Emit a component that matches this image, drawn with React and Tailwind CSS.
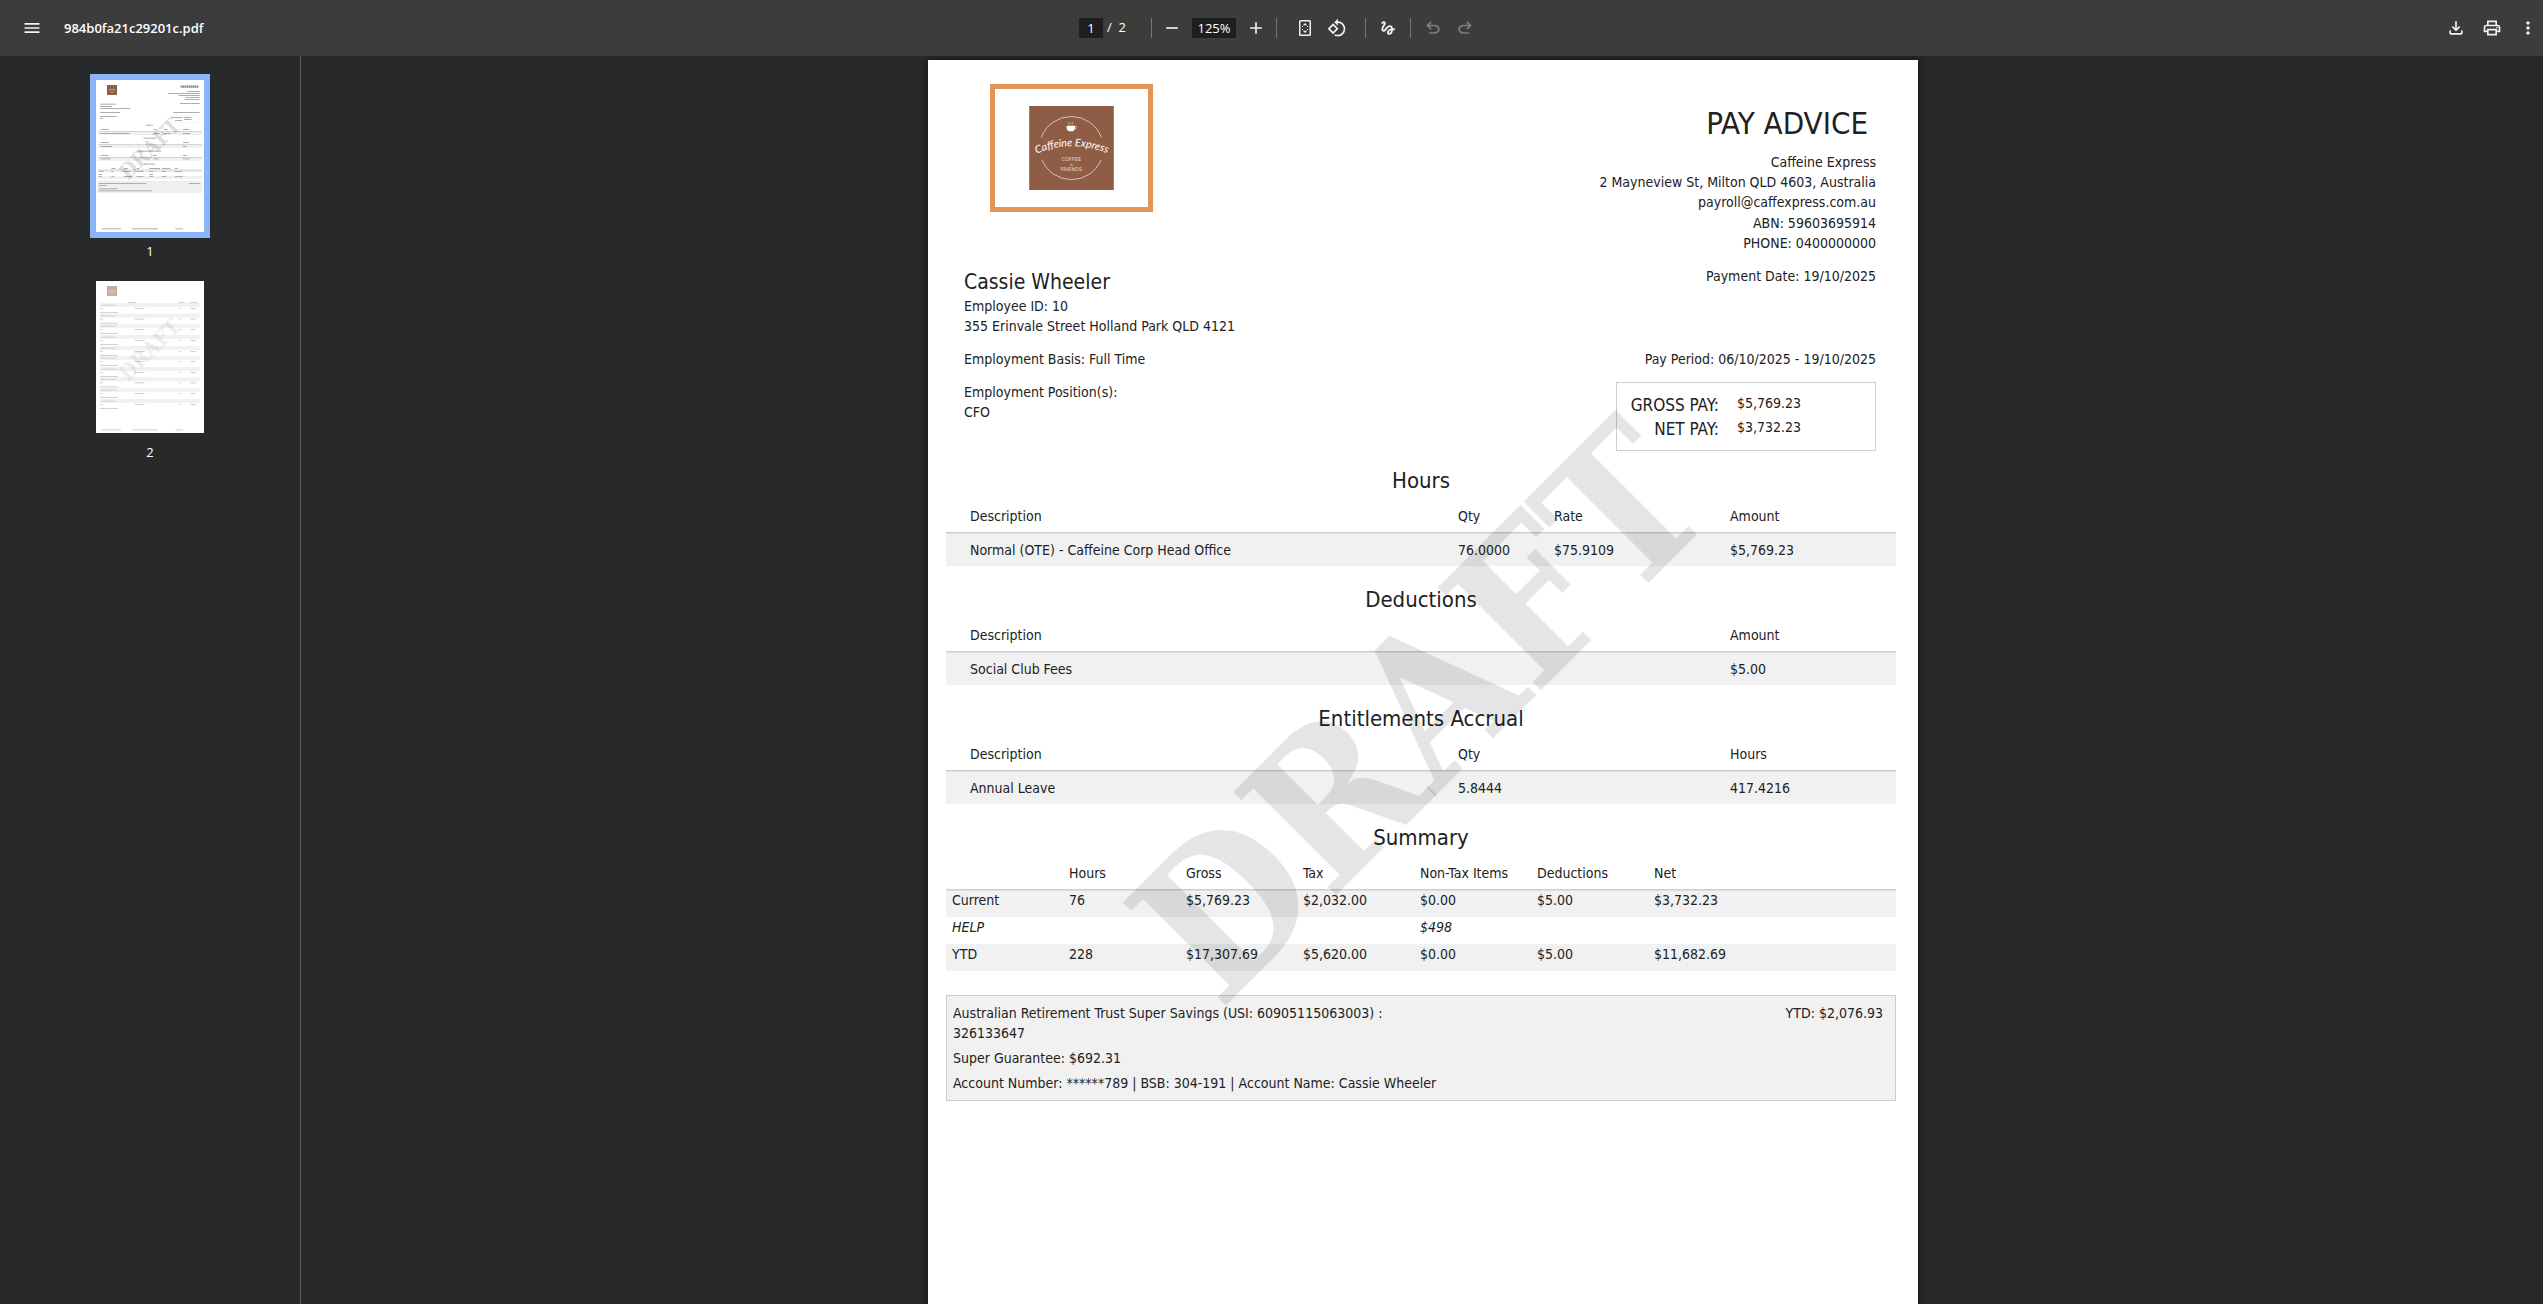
import React from 'react';
import { MdAdd, MdGesture, MdMenu, MdMoreVert, MdOutlinePrint, MdOutlineRotate90DegreesCcw, MdRemove } from 'react-icons/md';

const HOURS = {
  title: 'Hours',
  head: ['Description', 'Qty', 'Rate', 'Amount'],
  row: ['Normal (OTE) - Caffeine Corp Head Office', '76.0000', '$75.9109', '$5,769.23'],
};

const DEDUCTIONS = {
  title: 'Deductions',
  head: ['Description', '', '', 'Amount'],
  row: ['Social Club Fees', '', '', '$5.00'],
};

const ENTITLEMENTS = {
  title: 'Entitlements Accrual',
  head: ['Description', 'Qty', '', 'Hours'],
  row: ['Annual Leave', '5.8444', '', '417.4216'],
};

const SUMMARY_HEAD = ['', 'Hours', 'Gross', 'Tax', 'Non-Tax Items', 'Deductions', 'Net'];
const SUMMARY_ROWS = [
  ['Current', '76', '$5,769.23', '$2,032.00', '$0.00', '$5.00', '$3,732.23'],
  ['HELP', '', '', '', '$498', '', ''],
  ['YTD', '228', '$17,307.69', '$5,620.00', '$0.00', '$5.00', '$11,682.69'],
];

const SymbolIcon = ({ d }) => (
  <svg viewBox="0 -960 960 960" className="size-5" fill="currentColor" aria-hidden="true">
    <path d={d} />
  </svg>
);

const FitPageIcon = () => (
  <svg viewBox="0 0 20 20" className="size-5" aria-hidden="true">
    <rect x="4.75" y="2.75" width="10.5" height="14.5" rx="0.8" fill="none" stroke="currentColor" strokeWidth="1.5" />
    <path d="M10 5l2.2 2.2H7.800zM10 15l-2.200-2.200h4.400z" fill="currentColor" />
    <path d="M7 8.500h1M12 8.500h1M7 11.500h1M12 11.500h1" stroke="currentColor" strokeWidth="1" />
  </svg>
);

const IconButton = ({ label, disabled = false, children }) => (
  <button
    type="button"
    aria-label={label}
    disabled={disabled}
    className="flex size-8 items-center justify-center rounded-full text-[#f1f1f1] disabled:text-[#7f7f7f]"
  >
    {children}
  </button>
);

const Divider = ({ className = '' }) => <span className={`h-5 w-px bg-[#757575] ${className}`} />;

const Toolbar = () => (
  <header className="z-10 flex h-14 shrink-0 items-center bg-[#3c3c3c] font-['Open_Sans',sans-serif] text-white">
    <div className="flex flex-1 items-center gap-4 pl-4">
      <IconButton label="Menu">
        <MdMenu className="size-5" />
      </IconButton>
      <h1 className="pt-0.5 text-[13px] font-semibold">984b0fa21c29201c.pdf</h1>
    </div>

    <div className="flex items-center text-[13px]">
      <input aria-label="Page number" defaultValue="1" className="h-5 w-6 bg-[#1e1e1e] text-center" />
      <span className="ml-1 w-5 whitespace-pre">/  2</span>
      <Divider className="ml-6 mr-1" />
      <IconButton label="Zoom out">
        <MdRemove className="size-5" />
      </IconButton>
      <input aria-label="Zoom level" defaultValue="125%" className="mx-1 h-5 w-11 bg-[#1e1e1e] text-center" />
      <IconButton label="Zoom in">
        <MdAdd className="size-5" />
      </IconButton>
      <Divider className="ml-1 mr-3" />
      <IconButton label="Fit to page">
        <FitPageIcon />
      </IconButton>
      <IconButton label="Rotate counterclockwise">
        <MdOutlineRotate90DegreesCcw className="size-5" />
      </IconButton>
      <Divider className="ml-3 mr-1.5" />
      <IconButton label="Draw">
        <MdGesture className="size-[18px]" />
      </IconButton>
      <Divider className="mx-1.5" />
      <IconButton label="Undo" disabled>
        <SymbolIcon d="M280-200v-80h284q63 0 109.500-40T720-420q0-60-46.500-100T564-560H312l104 104-56 56-200-200 200-200 56 56-104 104h252q97 0 169.500 63T800-420q0 94-72.500 157T564-200H280Z" />
      </IconButton>
      <IconButton label="Redo" disabled>
        <SymbolIcon d="M396-200q-97 0-169.500-63T154-420q0-94 72.500-157T396-640h252L544-744l56-56 200 200-200 200-56-56 104-104H396q-63 0-109.500 40T240-420q0 60 46.500 100T396-280h284v80H396Z" />
      </IconButton>
    </div>

    <div className="-mr-px flex flex-1 items-center justify-end gap-1">
      <IconButton label="Download">
        <SymbolIcon d="M480-320 280-520l56-58 104 104v-326h80v326l104-104 56 58-200 200ZM240-160q-33 0-56.500-23.500T160-240v-120h80v120h480v-120h80v120q0 33-23.500 56.500T720-160H240Z" />
      </IconButton>
      <IconButton label="Print">
        <MdOutlinePrint className="size-5" />
      </IconButton>
      <IconButton label="More actions">
        <MdMoreVert className="size-5" />
      </IconButton>
    </div>
  </header>
);

// Text lines of the page miniatures: [x, y, width]
const PAGE_ONE_LINES = [
  [12, 71, 48], [12, 78, 36], [12, 84, 90], [12, 96, 60], [12, 108, 50], [12, 114, 9],
  [274, 33, 37], [217, 39, 94], [247, 45, 64], [268, 51, 43], [265, 57, 46], [252, 69, 59], [232, 96, 79],
  [229, 111, 30], [237, 120, 21], [264, 111, 23], [264, 117, 23],
  [150, 134, 21], [14, 147, 24], [173, 147, 8], [204, 147, 10], [261, 147, 18],
  [13, 159, 88], [173, 159, 18], [204, 159, 20], [261, 159, 22],
  [142, 173, 38], [14, 186, 24], [261, 186, 18], [14, 198, 34], [261, 198, 12],
  [126, 212, 69], [14, 225, 24], [173, 225, 8], [261, 225, 12], [14, 235, 30], [173, 235, 15], [261, 235, 20],
  [144, 251, 33], [46, 264, 12], [84, 264, 12], [122, 264, 8], [160, 264, 32], [198, 264, 25], [237, 264, 8],
  [8, 273, 16], [46, 273, 6], [84, 273, 21], [122, 273, 21], [160, 273, 12], [198, 273, 12], [237, 273, 21],
  [8, 282, 11], [160, 282, 11],
  [8, 288, 9], [46, 288, 8], [84, 288, 24], [122, 288, 21], [160, 288, 12], [198, 288, 12], [237, 288, 24],
  [8, 309, 142], [279, 309, 33], [8, 315, 24], [8, 325, 56], [8, 331, 160],
  [18, 445, 57], [108, 445, 78], [238, 445, 23],
];

const DAY_ROWS = [66, 98, 129, 162, 195, 225, 258, 289, 321, 354];

const ThumbDraft = () => (
  <text
    x="160"
    y="229"
    transform="rotate(-45 160 205)"
    textAnchor="middle"
    className="fill-black/15 font-['DejaVu_Serif_Condensed','DejaVu_Serif',serif] text-[65px] font-bold"
  >
    DRAFT
  </text>
);

const PageOneThumb = () => (
  <svg viewBox="0 0 324 456" className="h-38 w-27 bg-white" aria-hidden="true">
    <rect x="33" y="15" width="30" height="30" fill="#8f5d46" />
    <path d="M38 30q10-6 20 0M43 36h10" fill="none" stroke="#d9c4ba" strokeWidth="2" />
    <path d="M254 20h53" stroke="#8a8a8a" strokeWidth="7" strokeDasharray="5 1" />
    <rect x="226" y="107" width="85" height="20" fill="none" stroke="#e4e4e4" />
    {[153, 192, 231].map((y) => (
      <g key={y}>
        <rect x="6" y={y} width="312" height="12" fill="#efefef" />
        <rect x="6" y={y} width="312" height="2" fill="#c8c8c8" />
      </g>
    ))}
    <rect x="6" y="267" width="312" height="9" fill="#e6e6e6" />
    <rect x="6" y="288" width="312" height="9" fill="#efefef" />
    <rect x="6" y="303" width="312" height="35" fill="#efefef" stroke="#e0e0e0" />
    <g fill="#adadad">
      {PAGE_ONE_LINES.map(([x, y, w]) => (
        <rect key={`${x}-${y}`} x={x} y={y} width={w} height="3" />
      ))}
    </g>
    <ThumbDraft />
  </svg>
);

const PageTwoThumb = () => (
  <svg viewBox="0 0 324 456" className="h-38 w-27 bg-white" aria-hidden="true">
    <g opacity="0.5">
      <rect x="33" y="15" width="30" height="30" fill="#8f5d46" />
      <path d="M38 30q10-6 20 0M43 36h10" fill="none" stroke="#d9c4ba" strokeWidth="2" />
      <g fill="#a6a6a6">
        <rect x="95" y="63" width="25" height="3" />
        <rect x="249" y="63" width="17" height="3" />
        <rect x="281" y="63" width="22" height="3" />
        {DAY_ROWS.map((y) => (
          <g key={y}>
            <rect x="12" y={y} width="300" height="12" fill="#e4e4e4" />
            <rect x="14" y={y + 5} width="46" height="3" />
            <rect x="12" y={y + 15} width="9" height="3" />
            <rect x="116" y={y + 15} width="30" height="3" />
            <rect x="249" y={y + 15} width="7" height="3" />
            <rect x="283" y={y + 15} width="16" height="3" />
            <rect x="12" y={y + 27} width="54" height="3" />
          </g>
        ))}
        <rect x="18" y="445" width="57" height="3" />
        <rect x="108" y="445" width="78" height="3" />
        <rect x="238" y="445" width="23" height="3" />
      </g>
      <ThumbDraft />
    </g>
  </svg>
);

const Sidebar = () => (
  <nav
    aria-label="Page thumbnails"
    className="flex w-[301px] shrink-0 flex-col items-center border-r border-[#5f6163] bg-[#28292a] pt-[18px] font-['Open_Sans',sans-serif] text-[13px] leading-5 text-white"
  >
    <a href="#page-1" className="flex flex-col items-center gap-[3px]">
      <span className="border-[6px] border-[#8ab4f8]">
        <PageOneThumb />
      </span>
      1
    </a>
    <a href="#page-2" className="mt-3.5 flex flex-col items-center gap-[3px]">
      <span className="border-[6px] border-transparent">
        <PageTwoThumb />
      </span>
      2
    </a>
  </nav>
);

const Logo = () => (
  <svg viewBox="0 0 255 252" className="h-[84px] w-[85px]" role="img" aria-label="Caffeine Express logo">
    <rect width="255" height="252" fill="#8f5d46" />
    <path d="M1 0v252M254 0v252" stroke="#a8a09c" strokeWidth="2" />
    <path d="M37 94A96 96 0 0 1 217 94M39 162A96 96 0 0 0 216 162" fill="none" stroke="#d9c0b3" strokeWidth="3" />
    <path d="M113 59h25v6q0 11-12.500 11T113 65z" fill="#fff" />
    <path d="M137 61q7-1 6 4t-8 5" fill="none" stroke="#e8d9d1" strokeWidth="2" />
    <path d="M120 56q-3-4 0-8M126 56q-3-4 0-8M132 56q-3-4 0-8" fill="none" stroke="#d9c0b3" strokeWidth="2" />
    <path id="logo-arc" d="M8 150Q125 92 250 148" fill="none" />
    <text textAnchor="middle" className="fill-white font-['Lato',sans-serif] text-[32px] italic">
      <textPath href="#logo-arc" startOffset="50%">Caffeine Express</textPath>
    </text>
    <g textAnchor="middle" className="fill-[#ead9d0] font-['DejaVu_Sans',sans-serif] text-[15px]">
      <text x="127" y="165">COFFEE</text>
      <text x="127" y="180" className="text-[11px]">&amp;</text>
      <text x="127" y="195">FRIENDS</text>
    </g>
  </svg>
);

const SectionTitle = ({ children }) => <h3 className="text-center text-[22px] leading-7">{children}</h3>;

const LineTable = ({ title, head, row }) => (
  <section className="mb-5">
    <SectionTitle>{title}</SectionTitle>
    <table className="w-full table-fixed text-left">
      <colgroup>
        <col />
        <col className="w-24" />
        <col className="w-44" />
        <col className="w-[166px]" />
      </colgroup>
      <thead>
        <tr className="border-b border-[#cdcdcd]">
          {head.map((text, i) => (
            <th key={i} className="pb-1.5 pt-[11px] font-normal first:pl-6">{text}</th>
          ))}
        </tr>
      </thead>
      <tbody>
        <tr className="bg-[#f1f1f1] shadow-[inset_0_1px_#dedede]">
          {row.map((text, i) => (
            <td key={i} className="pb-1.5 pt-[7px] first:pl-6">{text}</td>
          ))}
        </tr>
      </tbody>
    </table>
  </section>
);

const SummaryTable = () => (
  <section>
    <SectionTitle>Summary</SectionTitle>
    <table className="w-full table-fixed text-left">
      <colgroup>
        {SUMMARY_HEAD.slice(1).map((text) => (
          <col key={text} className="w-[117px]" />
        ))}
        <col />
      </colgroup>
      <thead>
        <tr className="border-b border-[#cdcdcd]">
          {SUMMARY_HEAD.map((text, i) => (
            <th key={i} className="pb-1.5 pl-1.5 pt-[11px] font-normal">{text}</th>
          ))}
        </tr>
      </thead>
      <tbody>
        {SUMMARY_ROWS.map((row) => (
          <tr key={row[0]} className="odd:bg-[#f1f1f1] even:italic first:shadow-[inset_0_1px_#dedede]">
            {row.map((text, i) => (
              <td key={i} className="pb-[7px] pl-1.5">{text}</td>
            ))}
          </tr>
        ))}
      </tbody>
    </table>
  </section>
);

const Payslip = () => (
  <article
    id="page-1"
    className="relative min-h-[1403px] w-[990px] shrink-0 bg-white pl-[18px] pr-[22px] pt-6 font-['DejaVu_Sans_Condensed','DejaVu_Sans',sans-serif] text-[14px] leading-5 text-[#212121] shadow-[0_0_8px_rgba(0,0,0,0.6)]"
  >
    <div className="flex justify-between pl-[18px] pr-5">
      <div>
        <div className="ml-[26px] flex h-32 w-[163px] items-center justify-center border-[5px] border-[#e29558]">
          <Logo />
        </div>
        <h2 className="mt-14 text-[21px] leading-7">Cassie Wheeler</h2>
        <p>Employee ID: 10</p>
        <p>355 Erinvale Street Holland Park QLD 4121</p>
        <p className="mt-[13px]">Employment Basis: Full Time</p>
        <p className="mt-[13px]">Employment Position(s):</p>
        <p>CFO</p>
      </div>

      <div className="flex flex-col pt-5 text-right">
        <h1 className="mb-2.5 pr-2 text-[31px] leading-[38px]">PAY ADVICE</h1>
        <p>Caffeine Express</p>
        <p>2 Mayneview St, Milton QLD 4603, Australia</p>
        <p>payroll@caffexpress.com.au</p>
        <p className="mt-px">ABN: 59603695914</p>
        <p>PHONE: 0400000000</p>
        <p className="mt-[13px]">Payment Date: 19/10/2025</p>
        <p className="mt-[63px]">Pay Period: 06/10/2025 - 19/10/2025</p>
        <dl className="mt-[13px] grid h-[69px] w-[260px] grid-cols-[102px_auto] content-center gap-x-[18px] self-end border border-[#cdcdcd] leading-6">
          <dt className="text-[17px]">GROSS PAY:</dt>
          <dd className="text-left leading-5">$5,769.23</dd>
          <dt className="text-[17px]">NET PAY:</dt>
          <dd className="text-left leading-5">$3,732.23</dd>
        </dl>
      </div>
    </div>

    <div className="pt-4">
      <LineTable {...HOURS} />
      <LineTable {...DEDUCTIONS} />
      <LineTable {...ENTITLEMENTS} />
      <SummaryTable />
    </div>

    <section className="mt-6 border border-[#cdcdcd] bg-[#f1f1f1] pb-[7px] pl-1.5 pr-3 pt-[7px]">
      <div className="flex justify-between">
        <p className="w-1/2">Australian Retirement Trust Super Savings (USI: 60905115063003) : 326133647</p>
        <p>YTD: $2,076.93</p>
      </div>
      <p className="mt-[5px]">Super Guarantee: $692.31</p>
      <p className="mt-[5px]">Account Number: ******789 | BSB: 304-191 | Account Name: Cassie Wheeler</p>
    </section>

    {/* Watermark laid over the sheet */}
    <div className="pointer-events-none absolute left-0 right-1.5 top-0 flex h-[1304px] items-center justify-center">
      <span className="-rotate-45 font-['DejaVu_Serif_Condensed','DejaVu_Serif',serif] text-[200px] font-bold leading-none text-black/10">
        DRAFT
      </span>
    </div>
  </article>
);

const App = () => (
  <div className="flex h-screen flex-col overflow-hidden bg-[#282828]">
    <Toolbar />
    <div className="flex min-h-0 flex-1">
      <Sidebar />
      <main className="flex flex-1 justify-center overflow-y-auto pl-0.5 pt-1 [scrollbar-width:none]">
        <Payslip />
      </main>
    </div>
  </div>
);

export default App;
